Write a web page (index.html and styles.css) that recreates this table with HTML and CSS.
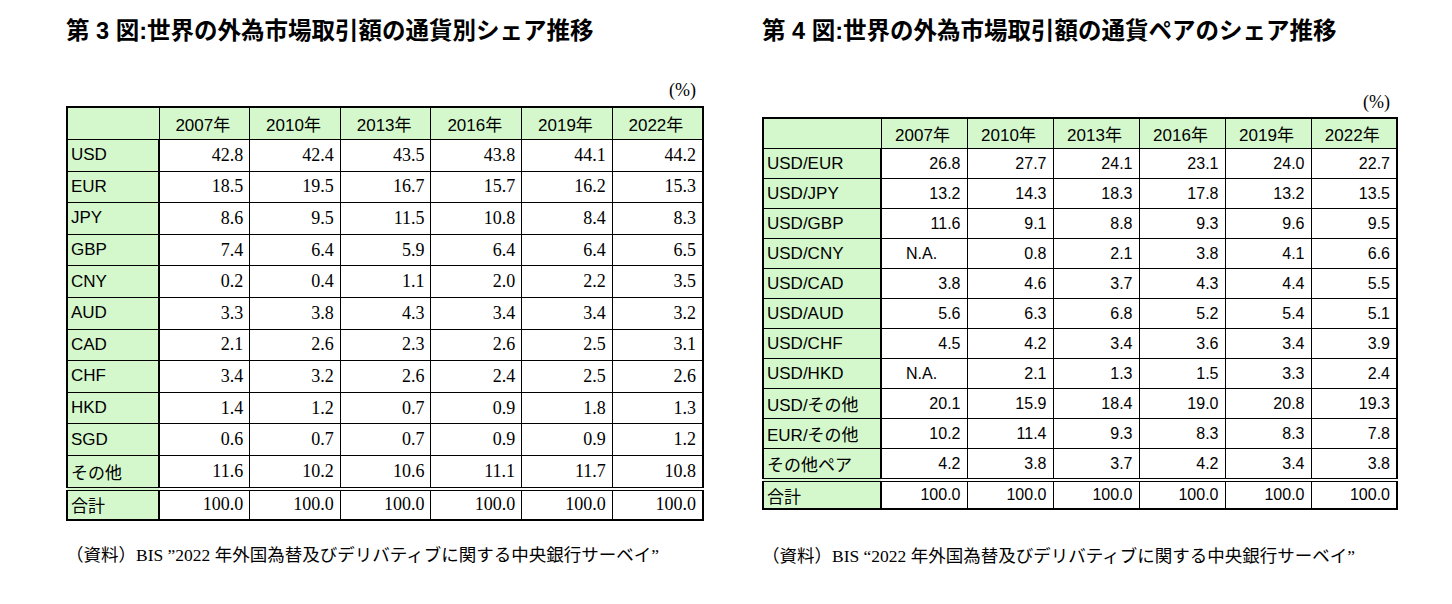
FILE: index.html
```html
<!DOCTYPE html>
<html lang="ja">
<head>
<meta charset="utf-8">
<title>外為市場取引額シェア推移</title>
<link rel="stylesheet" href="styles.css">
</head>
<body>
<div class="page">
  <section class="panel panel-left">
    <h2 class="title">第 3 図:世界の外為市場取引額の通貨別シェア推移</h2>
    <div class="unit">(%)</div>
    <table class="tbl tbl-ccy">
      <colgroup><col class="c-label"><col><col><col><col><col><col></colgroup>
      <tr class="head"><th></th><th>2007年</th><th>2010年</th><th>2013年</th><th>2016年</th><th>2019年</th><th>2022年</th></tr>
      <tr><td class="label">USD</td><td>42.8</td><td>42.4</td><td>43.5</td><td>43.8</td><td>44.1</td><td>44.2</td></tr>
      <tr><td class="label">EUR</td><td>18.5</td><td>19.5</td><td>16.7</td><td>15.7</td><td>16.2</td><td>15.3</td></tr>
      <tr><td class="label">JPY</td><td>8.6</td><td>9.5</td><td>11.5</td><td>10.8</td><td>8.4</td><td>8.3</td></tr>
      <tr><td class="label">GBP</td><td>7.4</td><td>6.4</td><td>5.9</td><td>6.4</td><td>6.4</td><td>6.5</td></tr>
      <tr><td class="label">CNY</td><td>0.2</td><td>0.4</td><td>1.1</td><td>2.0</td><td>2.2</td><td>3.5</td></tr>
      <tr><td class="label">AUD</td><td>3.3</td><td>3.8</td><td>4.3</td><td>3.4</td><td>3.4</td><td>3.2</td></tr>
      <tr><td class="label">CAD</td><td>2.1</td><td>2.6</td><td>2.3</td><td>2.6</td><td>2.5</td><td>3.1</td></tr>
      <tr><td class="label">CHF</td><td>3.4</td><td>3.2</td><td>2.6</td><td>2.4</td><td>2.5</td><td>2.6</td></tr>
      <tr><td class="label">HKD</td><td>1.4</td><td>1.2</td><td>0.7</td><td>0.9</td><td>1.8</td><td>1.3</td></tr>
      <tr><td class="label">SGD</td><td>0.6</td><td>0.7</td><td>0.7</td><td>0.9</td><td>0.9</td><td>1.2</td></tr>
      <tr><td class="label">その他</td><td>11.6</td><td>10.2</td><td>10.6</td><td>11.1</td><td>11.7</td><td>10.8</td></tr>
      <tr class="total"><td class="label">合計</td><td>100.0</td><td>100.0</td><td>100.0</td><td>100.0</td><td>100.0</td><td>100.0</td></tr>
    </table>
    <p class="source">（資料）BIS ”2022 年外国為替及びデリバティブに関する中央銀行サーベイ”</p>
  </section>

  <section class="panel panel-right">
    <h2 class="title">第 4 図:世界の外為市場取引額の通貨ペアのシェア推移</h2>
    <div class="unit">(%)</div>
    <table class="tbl tbl-pair">
      <colgroup><col class="c-label"><col><col><col><col><col><col></colgroup>
      <tr class="head"><th></th><th>2007年</th><th>2010年</th><th>2013年</th><th>2016年</th><th>2019年</th><th>2022年</th></tr>
      <tr><td class="label">USD/EUR</td><td>26.8</td><td>27.7</td><td>24.1</td><td>23.1</td><td>24.0</td><td>22.7</td></tr>
      <tr><td class="label">USD/JPY</td><td>13.2</td><td>14.3</td><td>18.3</td><td>17.8</td><td>13.2</td><td>13.5</td></tr>
      <tr><td class="label">USD/GBP</td><td>11.6</td><td>9.1</td><td>8.8</td><td>9.3</td><td>9.6</td><td>9.5</td></tr>
      <tr><td class="label">USD/CNY</td><td class="na">N.A.</td><td>0.8</td><td>2.1</td><td>3.8</td><td>4.1</td><td>6.6</td></tr>
      <tr><td class="label">USD/CAD</td><td>3.8</td><td>4.6</td><td>3.7</td><td>4.3</td><td>4.4</td><td>5.5</td></tr>
      <tr><td class="label">USD/AUD</td><td>5.6</td><td>6.3</td><td>6.8</td><td>5.2</td><td>5.4</td><td>5.1</td></tr>
      <tr><td class="label">USD/CHF</td><td>4.5</td><td>4.2</td><td>3.4</td><td>3.6</td><td>3.4</td><td>3.9</td></tr>
      <tr><td class="label">USD/HKD</td><td class="na">N.A.</td><td>2.1</td><td>1.3</td><td>1.5</td><td>3.3</td><td>2.4</td></tr>
      <tr><td class="label">USD/その他</td><td>20.1</td><td>15.9</td><td>18.4</td><td>19.0</td><td>20.8</td><td>19.3</td></tr>
      <tr><td class="label">EUR/その他</td><td>10.2</td><td>11.4</td><td>9.3</td><td>8.3</td><td>8.3</td><td>7.8</td></tr>
      <tr><td class="label">その他ペア</td><td>4.2</td><td>3.8</td><td>3.7</td><td>4.2</td><td>3.4</td><td>3.8</td></tr>
      <tr class="total"><td class="label">合計</td><td>100.0</td><td>100.0</td><td>100.0</td><td>100.0</td><td>100.0</td><td>100.0</td></tr>
    </table>
    <p class="source">（資料）BIS “2022 年外国為替及びデリバティブに関する中央銀行サーベイ”</p>
  </section>
</div>
</body>
</html>
```

FILE: styles.css
```css
body {
  margin: 0;
  background: #ffffff;
  color: #000000;
  font-family: "Liberation Sans", "Noto Sans CJK JP", sans-serif;
}

.page {
  display: flex;
  align-items: flex-start;
  gap: 58px;
  padding-left: 66px;
}

.panel-left { width: 638px; }
.panel-right { width: 636px; }

.title {
  margin: 16px 0 0;
  font-family: "Liberation Sans", "Noto Sans CJK JP", sans-serif;
  font-weight: bold;
  font-size: 23.5px;
  line-height: 30px;
  white-space: nowrap;
}

.unit {
  text-align: right;
  font-family: "Liberation Serif", "Noto Sans CJK JP", serif;
  font-size: 18px;
  line-height: 20px;
  padding-right: 8px;
}

.panel-left .unit { margin-top: 34px; }
.panel-right .unit { margin-top: 46px; }

.tbl {
  width: 100%;
  table-layout: fixed;
  border-collapse: collapse;
  border: 2px solid #000;
}

.panel-left .tbl { margin-top: 6px; }
.panel-right .tbl { margin-top: 5px; }

.tbl-ccy .c-label { width: 92px; }
.tbl-pair .c-label { width: 118px; }

.tbl th,
.tbl td {
  border: 1px solid #000;
  padding: 0 6px 0 3px;
  white-space: nowrap;
  vertical-align: middle;
}

.tbl th {
  background: #d4f8cc;
  font-weight: normal;
  text-align: center;
  font-family: "Liberation Sans", "Noto Sans CJK JP", sans-serif;
}

.tbl td {
  text-align: right;
}

.tbl td.label {
  background: #d4f8cc;
  text-align: left;
  border-right: 2px solid #000;
  font-family: "Liberation Sans", "Noto Sans CJK JP", sans-serif;
}

.tbl td.na {
  text-align: left;
  padding-left: 24px;
}

.tbl tr.total td {
  border-top: 4px double #000;
}

/* currency table */
.tbl-ccy th,
.tbl-ccy td.label { font-size: 17px; }
.tbl-ccy td {
  font-family: "Liberation Serif", serif;
  font-size: 18px;
}
.tbl-ccy tr.head th { height: 31px; }
.tbl-ccy td { height: 30.6px; }
.tbl-ccy tr.total td { height: 28px; }

/* pair table */
.tbl-pair th,
.tbl-pair td.label { font-size: 17px; }
.tbl-pair td {
  font-family: "Liberation Sans", sans-serif;
  font-size: 16px;
}
.tbl-pair tr.head th { height: 29px; }
.tbl-pair td { height: 29px; }
.tbl-pair tr.total td { height: 26px; }

.source {
  margin: 0;
  font-family: "Liberation Serif", "Noto Sans CJK JP", serif;
  font-size: 17.5px;
  line-height: 24px;
  white-space: nowrap;
}

.panel-left .source { margin-top: 22px; }
.panel-right .source { margin-top: 34px; }
```
